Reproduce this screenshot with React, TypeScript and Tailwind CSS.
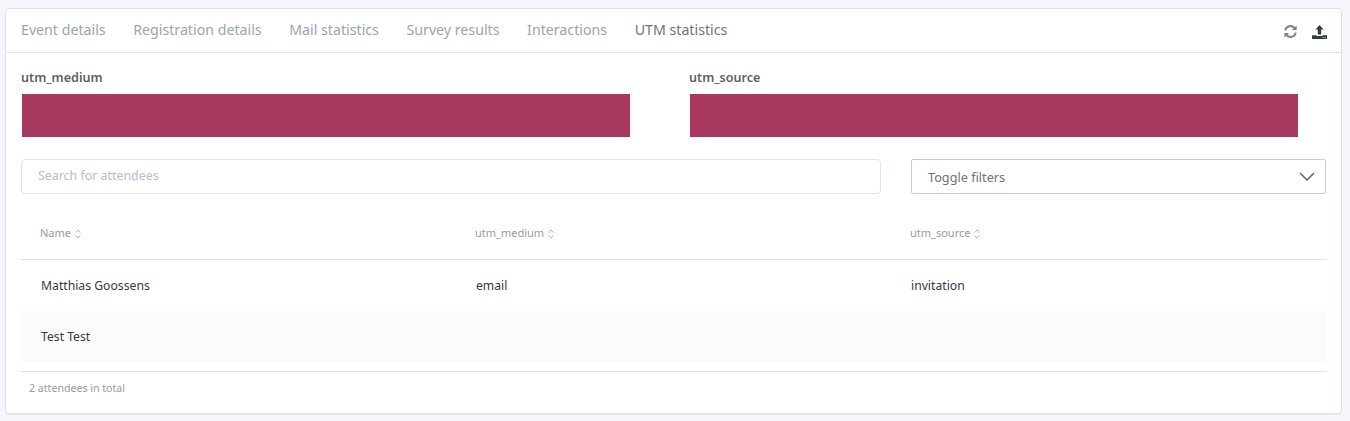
const tabs = ["Event details", "Registration details", "Mail statistics", "Survey results", "Interactions", "UTM statistics"];

function Sort() {
  return (
    <svg width="6" height="10" viewBox="0 0 6 10" fill="none" stroke="#b4b4b4" strokeWidth="1" className="ml-[4px]">
      <path d="M0.7 3.6 L3 1 L5.3 3.6" />
      <path d="M0.7 6.4 L3 9 L5.3 6.4" />
    </svg>
  );
}

function Head({ label, className }: { label: string; className: string }) {
  return (
    <div className={`flex items-center text-[11px] text-[#9a9a9a] ${className}`}>
      <span>{label}</span>
      <Sort />
    </div>
  );
}

function Chart({ label, className }: { label: string; className: string }) {
  return (
    <div className={className}>
      <div className="h-[17px] text-[12.6px] leading-[17px] font-semibold text-[#5f5f5f]">{label}</div>
      <div className="mt-[8px] ml-px h-[43px] w-[608px] bg-[#a8385d]" />
    </div>
  );
}

export default function App() {
  return (
    <div className="h-[421px] bg-[#f5f6fb] px-[5px] pt-[8px] font-['Noto_Sans',sans-serif]">
      <div className="h-[406px] w-[1337px] rounded-[4px] border border-[#e0e2e6] bg-white shadow-[0_1px_1px_rgba(0,0,0,0.05)]">
        <div className="flex h-[44px] items-center justify-between border-b border-[#e2e5e8] pl-[15px] pr-[14px]">
          <div className="flex -translate-y-px gap-[27.6px] text-[14.2px] text-[#98a6ad]">
            {tabs.map((t, i) => (
              <span key={t} className={i === 5 ? "text-[#6c757d]" : ""}>{t}</span>
            ))}
          </div>
          <div className="flex translate-y-px items-center gap-[15px]">
            <svg width="13" height="13" viewBox="0 0 13 13" fill="none" stroke="#808080" strokeWidth="2">
              <path d="M1.3 5.4 A5.2 5.2 0 0 1 10.4 3" />
              <path d="M11.7 7.6 A5.2 5.2 0 0 1 2.6 10" />
              <path d="M12.6 0.4 V5 H8 Z" fill="#808080" stroke="none" />
              <path d="M0.4 12.6 V8 H5 Z" fill="#808080" stroke="none" />
            </svg>
            <svg width="15" height="14" viewBox="0 0 15 14" fill="#323a46">
              <path d="M7.5 0 L11.5 4.5 H9.2 V9.5 H5.8 V4.5 H3.5 Z" />
              <path d="M0 10.2 H4.6 V11 H10.4 V10.2 H15 V14 H0 Z" />
              <rect x="10.6" y="12" width="1" height="1" fill="#fff" />
              <rect x="12.6" y="12" width="1" height="1" fill="#fff" />
            </svg>
          </div>
        </div>
        <div className="pl-[15px] pr-[15px]">
          <div className="flex pt-[16px]">
            <Chart label="utm_medium" className="w-[668px]" />
            <Chart label="utm_source" className="w-[620px]" />
          </div>
          <div className="mt-[22px] flex gap-[30px]">
            <div className="flex h-[35px] w-[860px] items-center rounded-[4px] border border-[#dfe5ea] pl-[16px] text-[12.4px] text-[#b9bdcc]">
              <span>Search for attendees</span>
            </div>
            <div className="flex h-[35px] w-[415px] items-center justify-between rounded-[2px] border border-[#c9ccd0] pl-[16px] pr-[10px] text-[12.7px] text-[#6a737b]">
              <span className="translate-y-px">Toggle filters</span>
              <svg width="16" height="9" viewBox="0 0 16 9" fill="none" stroke="#5f6770" strokeWidth="1.5">
                <path d="M1 1 L8 8 L15 1" />
              </svg>
            </div>
          </div>
          <div className="w-[1305px]">
            <div className="flex h-[66px] items-center border-b border-[#dee2e6] pl-[19px] pt-[14px]">
              <Head label="Name" className="w-[435px]" />
              <Head label="utm_medium" className="w-[435px]" />
              <Head label="utm_source" className="" />
            </div>
            <div className="flex h-[51px] items-center pl-[20px] pt-[1px] text-[12.2px] text-[#343a40]">
              <span className="w-[435px]">Matthias Goossens</span>
              <span className="w-[435px]">email</span>
              <span>invitation</span>
            </div>
            <div className="flex h-[51px] items-center bg-[#fbfbfb] pl-[20px] pt-[1px] text-[12.2px] text-[#343a40]">
              <span>Test Test</span>
            </div>
            <div className="mt-[9px] flex h-[33px] items-center border-t border-[#dee2e6] pl-[8px] pt-[1px] text-[10.6px] text-[#9a9a9a]">
              2 attendees in total
            </div>
          </div>
        </div>
      </div>
    </div>
  );
}
